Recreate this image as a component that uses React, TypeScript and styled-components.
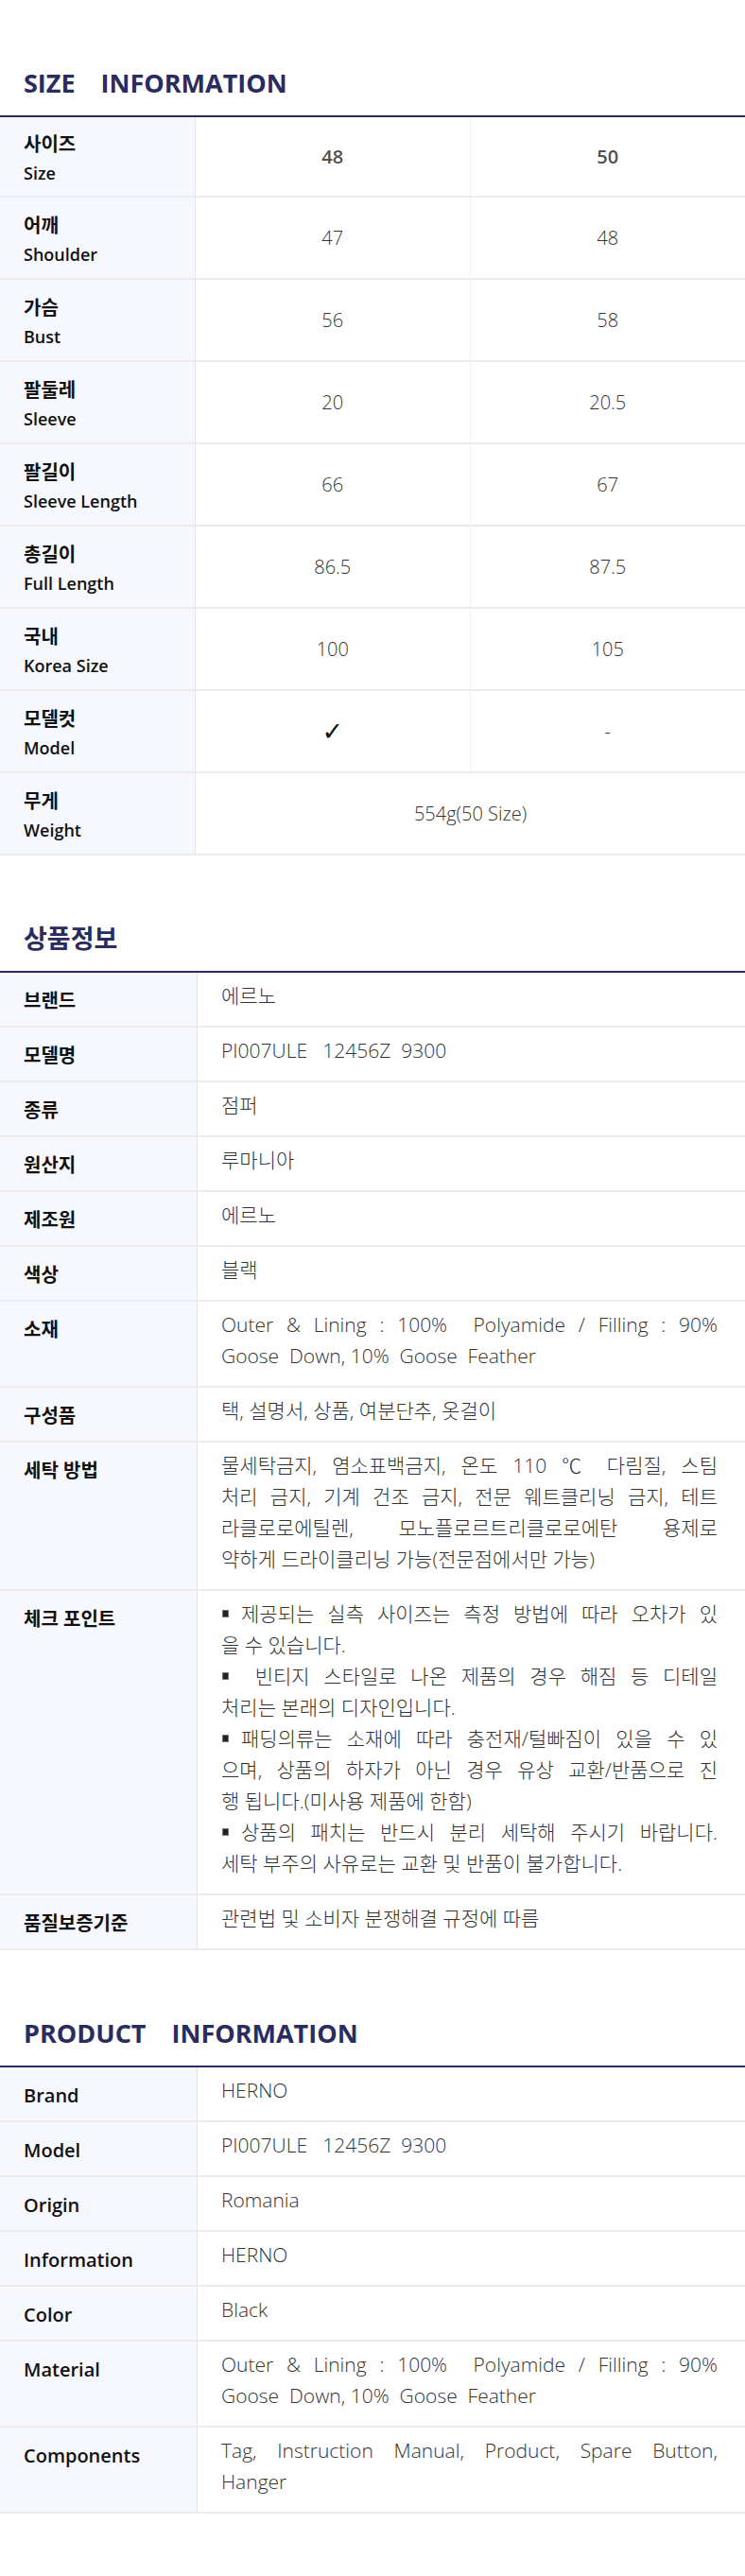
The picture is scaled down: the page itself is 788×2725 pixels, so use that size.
import React from 'react';
import styled, { createGlobalStyle } from 'styled-components';

const navy = '#2a2b5e';

const GlobalStyle = createGlobalStyle`
  body {
    margin: 0;
    background: #fff;
    font-family: "Open Sans", "Noto Sans CJK KR", sans-serif;
    color: #222;
  }
`;

type SizeRow = { ko: string; en: string; a: string; b?: string; head?: boolean };

const sizeRows: SizeRow[] = [
  { ko: '사이즈', en: 'Size', a: '48', b: '50', head: true },
  { ko: '어깨', en: 'Shoulder', a: '47', b: '48' },
  { ko: '가슴', en: 'Bust', a: '56', b: '58' },
  { ko: '팔둘레', en: 'Sleeve', a: '20', b: '20.5' },
  { ko: '팔길이', en: 'Sleeve Length', a: '66', b: '67' },
  { ko: '총길이', en: 'Full Length', a: '86.5', b: '87.5' },
  { ko: '국내', en: 'Korea Size', a: '100', b: '105' },
  { ko: '모델컷', en: 'Model', a: '✓', b: '-' },
  { ko: '무게', en: 'Weight', a: '554g(50 Size)' },
];

// a value is either one line of text or paragraphs split into their lines
type Value = string | string[][];

const material: Value = [
  ['Outer & Lining : 100%\u00a0 Polyamide / Filling : 90%', 'Goose\u00a0 Down, 10%\u00a0 Goose\u00a0 Feather'],
];
const model = 'PI007ULE\u00a0\u00a0 12456Z\u00a0 9300';

const infoKo: [string, Value][] = [
  ['브랜드', '에르노'],
  ['모델명', model],
  ['종류', '점퍼'],
  ['원산지', '루마니아'],
  ['제조원', '에르노'],
  ['색상', '블랙'],
  ['소재', material],
  ['구성품', '택, 설명서, 상품, 여분단추, 옷걸이'],
  [
    '세탁 방법',
    [
      [
        '물세탁금지, 염소표백금지, 온도 110 ℃ 다림질, 스팀',
        '처리 금지, 기계 건조 금지, 전문 웨트클리닝 금지, 테트',
        '라클로로에틸렌,\u00a0 모노플로르트리클로로에탄\u00a0 용제로',
        '약하게 드라이클리닝 가능(전문점에서만 가능)',
      ],
    ],
  ],
  [
    '체크 포인트',
    [
      ['■제공되는 실측 사이즈는 측정 방법에 따라 오차가 있', '을 수 있습니다.'],
      ['■\u00a0빈티지 스타일로 나온 제품의 경우 해짐 등 디테일', '처리는 본래의 디자인입니다.'],
      [
        '■패딩의류는 소재에 따라 충전재/털빠짐이 있을 수 있',
        '으며, 상품의 하자가 아닌 경우 유상 교환/반품으로 진',
        '행 됩니다.(미사용 제품에 한함)',
      ],
      ['■상품의 패치는 반드시 분리 세탁해 주시기 바랍니다.', '세탁 부주의 사유로는 교환 및 반품이 불가합니다.'],
    ],
  ],
  ['품질보증기준', '관련법 및 소비자 분쟁해결 규정에 따름'],
];

const infoEn: [string, Value][] = [
  ['Brand', 'HERNO'],
  ['Model', model],
  ['Origin', 'Romania'],
  ['Information', 'HERNO'],
  ['Color', 'Black'],
  ['Material', material],
  ['Components', [['Tag, Instruction Manual, Product, Spare Button,', 'Hanger']]],
];

function Paragraph({ lines }: { lines: string[] }) {
  return (
    <>
      {lines.map((line, i) => {
        const bullet = line.startsWith('■');
        return (
          <Line key={i} $justify={i < lines.length - 1}>
            {bullet && <Bullet />}
            {bullet ? line.slice(1) : line}
          </Line>
        );
      })}
    </>
  );
}

function InfoTable({ rows }: { rows: [string, Value][] }) {
  return (
    <InfoGrid>
      {rows.map(([label, value]) => (
        <React.Fragment key={label}>
          <InfoLabel>{label}</InfoLabel>
          <InfoValue>
            {typeof value === 'string' ? value : value.map((p, i) => <Paragraph key={i} lines={p} />)}
          </InfoValue>
        </React.Fragment>
      ))}
    </InfoGrid>
  );
}

export default function App() {
  return (
    <>
      <GlobalStyle />
      <Page>
        <Section>
          <Title>SIZE INFORMATION</Title>
          <SizeGrid>
            {sizeRows.map((r) => (
              <React.Fragment key={r.en}>
                <SizeLabel>
                  <KoLine>{r.ko}</KoLine>
                  <EnLine>{r.en}</EnLine>
                </SizeLabel>
                {r.b === undefined ? (
                  <SizeValue $wide>{r.a}</SizeValue>
                ) : (
                  <>
                    <SizeValue $head={r.head} $divider>
                      {r.a === '✓' ? <Check>{r.a}</Check> : r.a}
                    </SizeValue>
                    <SizeValue $head={r.head}>{r.b}</SizeValue>
                  </>
                )}
              </React.Fragment>
            ))}
          </SizeGrid>
        </Section>

        <Section>
          <Title>상품정보</Title>
          <InfoTable rows={infoKo} />
        </Section>

        <Section>
          <Title>PRODUCT INFORMATION</Title>
          <InfoTable rows={infoEn} />
        </Section>
      </Page>
    </>
  );
}

const Page = styled.main`
  padding: 68px 0 67px;
`;

const Section = styled.section`
  & + & {
    margin-top: 68px;
  }
`;

const Title = styled.h2`
  margin: 0 0 14px;
  padding-left: 25px;
  font-size: 27px;
  font-weight: 700;
  line-height: 40px;
  color: ${navy};
  word-spacing: 20px;
`;

const SizeGrid = styled.div`
  display: grid;
  grid-template-columns: 207px 1fr 1fr;
  grid-template-rows: 85px repeat(8, 87px);
  border-top: 2px solid ${navy};
`;

const SizeLabel = styled.div`
  display: flex;
  flex-direction: column;
  justify-content: center;
  padding: 4px 0 0 25px;
  background: #f7f8fd;
  border-right: 1px solid #e2e3ea;
  border-bottom: 2px solid #ececec;
  color: #111;
`;

const KoLine = styled.span`
  font-size: 20px;
  font-weight: 600;
  line-height: 30px;
`;

const EnLine = styled.span`
  font-size: 18px;
  font-weight: 600;
  line-height: 30px;
`;

const SizeValue = styled.div<{ $head?: boolean; $wide?: boolean; $divider?: boolean }>`
  display: flex;
  align-items: center;
  justify-content: center;
  grid-column: ${(p) => (p.$wide ? 'span 2' : 'auto')};
  border-bottom: 2px solid #ececec;
  border-right: ${(p) => (p.$divider ? '1px solid #f1f1f1' : 'none')};
  font-size: 20px;
  font-weight: ${(p) => (p.$head ? 600 : 300)};
  color: ${(p) => (p.$head ? '#505050' : '#333')};
`;

const Check = styled.span`
  font-family: "DejaVu Sans", sans-serif;
  font-size: 27px;
  font-weight: 700;
  color: #111;
`;

const InfoGrid = styled.div`
  display: grid;
  grid-template-columns: 209px 1fr;
  border-top: 2px solid ${navy};
`;

const InfoLabel = styled.div`
  padding: 13px 10px 0 25px;
  background: #f7f8fd;
  border-right: 1px solid #e2e3ea;
  border-bottom: 2px solid #ececec;
  font-size: 20px;
  font-weight: 600;
  line-height: 33px;
  color: #111;
`;

const InfoValue = styled.div`
  padding: 8px 29px 15px 25px;
  border-bottom: 2px solid #ececec;
  font-size: 21px;
  font-weight: 300;
  line-height: 33px;
  color: #333;
`;

const Line = styled.span<{ $justify: boolean }>`
  display: block;
  text-align: justify;
  text-align-last: ${(p) => (p.$justify ? 'justify' : 'auto')};
`;

const Bullet = styled.span`
  display: inline-block;
  width: 7px;
  height: 8px;
  margin: 0 13px 0 1px;
  vertical-align: 4px;
  background: #222;
  border: 1px solid #777;
  box-sizing: border-box;
`;
